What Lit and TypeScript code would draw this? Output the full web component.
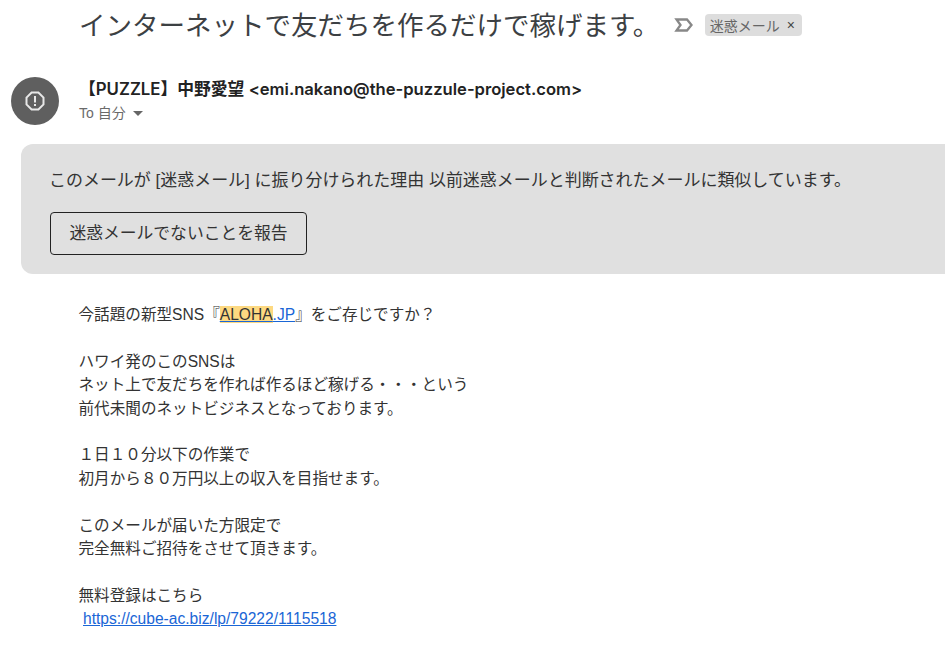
import { LitElement, html, css } from 'lit';
import { customElement } from 'lit/decorators.js';

@customElement('app-root')
export class AppRoot extends LitElement {
  static styles = css`
    :host {
      display: block;
      width: 945px;
      height: 649px;
      overflow: hidden;
      background: #fff;
      color: #333;
      font-family: "Liberation Sans", "Noto Sans CJK JP", sans-serif;
    }
    .subject-row {
      display: flex;
      align-items: center;
      height: 50px;
      padding-left: 79px;
    }
    .subject {
      font-size: 26.5px;
      font-weight: 400;
      color: #3c4043;
      margin: 0 0 3px;
      white-space: nowrap;
    }
    .imp {
      margin-left: 14.5px;
      width: 20px;
      height: 20px;
      flex: none;
    }
    .label {
      margin-left: 11px;
      display: flex;
      align-items: center;
      gap: 7px;
      height: 22px;
      padding: 0 7px 0 5px;
      background: #ddd;
      border-radius: 4px;
      font-size: 14px;
      color: #666;
      white-space: nowrap;
    }
    .label .x {
      font-size: 14px;
      color: #444;
    }
    .sender {
      display: flex;
      margin-top: 27px;
      padding-left: 11px;
    }
    .avatar {
      width: 48px;
      height: 48px;
      border-radius: 50%;
      background: #5f5f5f;
      display: flex;
      align-items: center;
      justify-content: center;
      flex: none;
    }
    .who {
      margin-left: 20px;
    }
    .from {
      font-family: Inter, "Noto Sans CJK JP", sans-serif;
      font-size: 16.8px;
      line-height: 20px;
      margin-top: 2px;
      font-weight: 600;
      color: #222;
      white-space: nowrap;
    }
    .addr {
      font-size: 16.6px;
    }
    .to {
      display: flex;
      align-items: center;
      gap: 6px;
      margin-top: 4px;
      font-size: 14px;
      line-height: 20px;
      color: #6a6a6a;
    }
    .caret {
      width: 0;
      height: 0;
      border-left: 5px solid transparent;
      border-right: 5px solid transparent;
      border-top: 5px solid #666;
      margin-left: 1px;
    }
    .notice {
      margin: 19px 0 0 21px;
      height: 130px;
      box-sizing: border-box;
      background: #e0e0e0;
      border-radius: 12px 0 0 12px;
      padding: 25px 0 0 28px;
    }
    .reason {
      font-size: 16.98px;
      line-height: 24px;
      color: #333;
      white-space: nowrap;
    }
    .report {
      display: block;
      margin: 19px 0 0 1px;
      width: 257px;
      height: 43px;
      box-sizing: border-box;
      border: 1px solid #222;
      border-radius: 4px;
      background: transparent;
      font-family: inherit;
      font-size: 16.8px;
      color: #333;
      padding: 0 0 3px;
    }
    .body {
      margin-top: 29px;
      padding-left: 78.5px;
      font-size: 15.6px;
      line-height: 23.4px;
      color: #333;
    }
    .body div {
      min-height: 23.4px;
      white-space: nowrap;
    }
    a {
      color: #1a66d6;
      text-decoration: underline;
    }
    mark {
      background: #fdd981;
      color: #333;
    }
    .url {
      padding-left: 4.5px;
    }
  `;

  render() {
    return html`
      <div class="subject-row">
        <h1 class="subject">インターネットで友だちを作るだけで稼げます。</h1>
        <svg class="imp" viewBox="0 0 20 20">
          <path d="M2.500 4.500h10.500l4.500 5.500-4.500 5.500H2.500L6.500 10z" fill="none" stroke="#888" stroke-width="2.300"></path>
        </svg>
        <span class="label">迷惑メール<span class="x">×</span></span>
      </div>

      <div class="sender">
        <div class="avatar">
          <svg width="24" height="24" viewBox="0 0 24 24">
            <path d="M8.600 3.500h6.800l5.100 5.100v6.800l-5.100 5.100H8.600l-5.100-5.100V8.600z" fill="none" stroke="#e8e8e8" stroke-width="2"></path>
            <rect x="11" y="7" width="2" height="6.500" fill="#e8e8e8"></rect>
            <rect x="11" y="15" width="2" height="2" fill="#e8e8e8"></rect>
          </svg>
        </div>
        <div class="who">
          <div class="from">【PUZZLE】中野愛望 <span class="addr">&lt;emi.nakano@the-puzzule-project.com&gt;</span></div>
          <div class="to">To 自分 <span class="caret"></span></div>
        </div>
      </div>

      <div class="notice">
        <div class="reason">このメールが [迷惑メール] に振り分けられた理由 以前迷惑メールと判断されたメールに類似しています。</div>
        <button class="report">迷惑メールでないことを報告</button>
      </div>

      <div class="body">
        <div>今話題の新型SNS『<a href="#"><mark>ALOHA</mark>.JP</a>』をご存じですか？</div>
        <div></div>
        <div>ハワイ発のこのSNSは</div>
        <div>ネット上で友だちを作れば作るほど稼げる・・・という</div>
        <div>前代未聞のネットビジネスとなっております。</div>
        <div></div>
        <div>１日１０分以下の作業で</div>
        <div>初月から８０万円以上の収入を目指せます。</div>
        <div></div>
        <div>このメールが届いた方限定で</div>
        <div>完全無料ご招待をさせて頂きます。</div>
        <div></div>
        <div>無料登録はこちら</div>
        <div class="url"><a href="#">https://cube-ac.biz/lp/79222/1115518</a></div>
      </div>
    `;
  }
}
